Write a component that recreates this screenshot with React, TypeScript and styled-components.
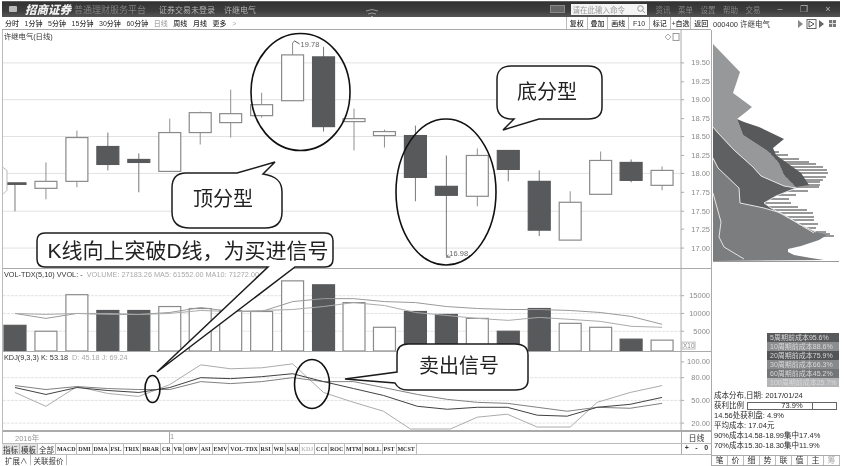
import styled, { createGlobalStyle } from 'styled-components';

const GlobalStyle = createGlobalStyle`
  html, body {
    margin: 0;
    padding: 0;
    background: #fff;
  }
  body {
    font-family: "Liberation Sans", "Noto Sans CJK SC", sans-serif;
  }
`;

const Frame = styled.div`
  width: 844px;
  height: 466px;
  box-sizing: border-box;
  padding: 1px 4px 0 2px;
  display: flex;
  flex-direction: column;
  overflow: hidden;
  background: #fff;
  color: #2a2a2a;
  filter: blur(0.45px);
`;

const TitleBar = styled.div`
  height: 16px;
  flex: none;
  display: flex;
  align-items: center;
  background: linear-gradient(#8a8a8a 0, #333 1px, #3d3d3d 60%, #555 100%);
  color: #aaa;
  font-size: 8px;
`;

const LogoMark = styled.span`
  width: 8px;
  height: 6px;
  margin: 0 8px 0 7px;
  background: #b9b9b9;
  border-radius: 1px;
`;

const Brand = styled.span`
  font-size: 11.5px;
  font-weight: 900;
  font-style: italic;
  color: #f2f2f2;
  width: 49px;
  white-space: nowrap;
`;

const TitleText = styled.span<{ $w: number; $dim?: boolean }>`
  width: ${(p) => p.$w}px;
  font-size: ${(p) => (p.$dim ? 9 : 8)}px;
  color: ${(p) => (p.$dim ? '#808080' : '#b5b5b5')};
  white-space: nowrap;
`;

const TitleSpring = styled.div`
  flex: 1;
  display: flex;
  justify-content: center;
  padding: 6px 70px 0 0;
`;

const KeyIcon = styled.span`
  width: 13px;
  height: 6px;
  margin-right: 6px;
  border: 1px solid #888;
  background: #666;
`;

const CommandBox = styled.div`
  width: 76px;
  height: 11px;
  box-sizing: border-box;
  margin-right: 9px;
  padding: 0 2px;
  display: flex;
  align-items: center;
  justify-content: space-between;
  background: #f4f4f4;
  color: #999;
  font-size: 7.5px;
`;

const TitleMenu = styled.span`
  width: 22.5px;
  font-size: 7.5px;
  color: #858585;
`;

const WinButton = styled.span`
  width: 24px;
  text-align: center;
  font-size: 9px;
  color: #bbb;
`;

const Toolbar = styled.div`
  height: 13px;
  flex: none;
  display: flex;
  align-items: center;
  font-size: 7px;
  font-weight: 500;
  color: #333;
`;

const PeriodGroup = styled.div`
  width: 564px;
  height: 100%;
  box-sizing: border-box;
  padding-left: 3px;
  display: flex;
  align-items: center;
  gap: 5.6px;
  border-bottom: 1px solid #aaa;
`;

const Period = styled.span<{ $off?: boolean }>`
  color: ${(p) => (p.$off ? '#aaa' : '#333')};
  white-space: nowrap;
`;

const ToolGroup = styled.div`
  width: 145px;
  height: 100%;
  box-sizing: border-box;
  display: flex;
  border-bottom: 1px solid #aaa;
`;

const ToolButton = styled.span`
  flex: 1;
  display: flex;
  align-items: center;
  justify-content: center;
  border-left: 1px solid #bbb;
  white-space: nowrap;
`;

const StockHead = styled.div`
  flex: 1;
  height: 100%;
  display: flex;
  align-items: center;
  justify-content: space-between;
  padding: 0 2px 0 2px;
  font-size: 7.5px;
  font-weight: 400;
`;

const Body = styled.div`
  flex: 1;
  min-height: 0;
  display: flex;
`;

const MainColumn = styled.div`
  width: 709px;
  flex: none;
  display: flex;
  flex-direction: column;
`;

const ChartStack = styled.div`
  position: relative;
  height: 402px;
  flex: none;
  display: flex;
  flex-direction: column;
  border-left: 1px solid #bbb;
  border-bottom: 1px solid #aaa;
  box-sizing: border-box;
`;

const Pane = styled.div<{ $h: number }>`
  position: relative;
  height: ${(p) => p.$h}px;
  flex: none;
  border-bottom: 1px solid #aaa;
  box-sizing: border-box;
  &:last-of-type {
    border-bottom: 0;
  }
`;

const PaneSvg = styled.svg`
  display: block;
  width: 100%;
  height: 100%;
`;

const PaneTitle = styled.div`
  position: absolute;
  left: 1px;
  top: 1px;
  font-size: 7.3px;
  color: #333;
  white-space: nowrap;
  span {
    color: #aaa;
    margin-left: 4px;
  }
`;

const Overlay = styled.svg`
  position: absolute;
  left: -1px;
  top: 0;
  width: 709px;
  height: 402px;
  pointer-events: none;
`;

const Callout = styled.div<{ $x: number; $y: number; $size?: number }>`
  position: absolute;
  left: ${(p) => p.$x}px;
  top: ${(p) => p.$y}px;
  transform: translate(-50%, -50%);
  font-size: ${(p) => p.$size ?? 20}px;
  line-height: 1;
  color: #222;
  white-space: nowrap;
`;

const DateRow = styled.div`
  height: 12px;
  flex: none;
  display: flex;
  align-items: center;
  font-size: 7.5px;
  color: #999;
  border-left: 1px solid #bbb;
  border-bottom: 1px solid #bbb;
  box-sizing: border-box;
`;

const DateMark = styled.span`
  margin-left: 12px;
  width: 154px;
  border-right: 1px solid #aaa;
`;

const DateTail = styled.div`
  flex: 1;
  height: 100%;
  border-right: 1px solid #aaa;
`;

const AxisBox = styled.div`
  width: 29px;
  height: 100%;
  flex: none;
  display: flex;
  align-items: center;
  justify-content: center;
  color: #333;
  font-size: 8px;
`;

const TabRow = styled.div`
  height: 11px;
  flex: none;
  display: flex;
  font-size: 6px;
  font-family: "Liberation Serif", "Noto Sans CJK SC", serif;
  font-weight: 700;
  color: #333;
  border-bottom: 1px solid #bbb;
  box-sizing: border-box;
`;

const Tab = styled.span<{ $cn?: boolean; $on?: boolean; $off?: boolean }>`
  display: flex;
  align-items: center;
  padding: 0 ${(p) => (p.$cn ? 1 : 0.9)}px;
  border-right: 1px solid #bbb;
  background: ${(p) => (p.$cn && !p.$on ? '#e3e3e3' : '#fff')};
  color: ${(p) => (p.$off ? '#bbb' : '#333')};
  font-family: ${(p) => (p.$cn ? '"Noto Sans CJK SC", sans-serif' : 'inherit')};
  font-weight: ${(p) => (p.$cn ? 400 : 700)};
  font-size: ${(p) => (p.$cn ? 7.5 : 6)}px;
  white-space: nowrap;
`;

const TabSpring = styled.div`
  flex: 1;
`;

const ZoomButtons = styled.div`
  width: 29px;
  flex: none;
  display: grid;
  grid-template-columns: repeat(3, 1fr);
  border-left: 1px solid #aaa;
  font-size: 7px;
  text-align: center;
  font-family: "Liberation Sans", sans-serif;
`;

const ExpandRow = styled.div`
  height: 10px;
  flex: none;
  display: flex;
  font-size: 7.5px;
  color: #333;
`;

const ExpandTab = styled.span`
  display: flex;
  align-items: center;
  padding: 0 2px 0 3px;
  border-right: 1px solid #bbb;
`;

const SideColumn = styled.div`
  flex: 1;
  min-width: 0;
  display: flex;
  flex-direction: column;
  border-left: 1px solid #aaa;
`;

const DistSvg = styled.svg`
  display: block;
  width: 129px;
  height: 303px;
  flex: none;
`;

const Legend = styled.div`
  width: 72px;
  flex: none;
  align-self: flex-end;
  margin-right: 1px;
  display: flex;
  flex-direction: column;
`;

const LegendRow = styled.div<{ $bg: string }>`
  height: 9px;
  line-height: 9px;
  padding-left: 3px;
  font-size: 7px;
  color: #d8d8d8;
  background: ${(p) => p.$bg};
  white-space: nowrap;
`;

const InfoBlock = styled.div`
  flex: 1;
  padding: 4px 0 0 2px;
  font-size: 7.5px;
  color: #2a2a2a;
  line-height: 10px;
  white-space: nowrap;
`;

const ProfitRow = styled.div`
  display: flex;
  align-items: center;
  gap: 3px;
`;

const ProfitBar = styled.div`
  width: 90px;
  height: 8px;
  box-sizing: border-box;
  border: 1px solid #666;
  position: relative;
  text-align: center;
  line-height: 6px;
  font-size: 7.5px;
  &::after {
    content: '';
    position: absolute;
    right: 23px;
    top: 0;
    bottom: 0;
    border-left: 1px solid #666;
  }
`;

const SideTabs = styled.div`
  height: 11px;
  flex: none;
  display: grid;
  grid-template-columns: repeat(8, 1fr);
  font-size: 8px;
  border-top: 1px solid #aaa;
  border-bottom: 1px solid #aaa;
  box-sizing: border-box;
`;

const SideTab = styled.span<{ $off?: boolean }>`
  text-align: center;
  line-height: 9px;
  border-right: 1px solid #bbb;
  color: ${(p) => (p.$off ? '#aaa' : '#333')};
`;

type Candle = { x: number; hi: number; lo: number; top: number; bot: number; down: boolean };
const c = (x: number, hi: number, lo: number, top: number, bot: number, down = false): Candle => ({
  x, hi, lo, top, bot, down,
});

const candles: Candle[] = [
  c(14, 184, 212, 183.5, 185, true),
  c(45, 163, 200, 182, 189),
  c(76, 131, 188, 138, 182),
  c(107, 133, 171, 147, 165, true),
  c(138, 154, 193, 160, 163, true),
  c(169, 119, 172, 133, 172),
  c(199.5, 112, 145, 113, 133),
  c(230, 90, 138, 114, 123),
  c(261, 93, 118, 105, 116),
  c(292, 43, 101, 55, 101),
  c(323, 47, 132, 57, 127, true),
  c(353.5, 109, 151, 119, 122),
  c(384, 130, 148, 132, 136),
  c(415, 126, 202, 136, 178, true),
  c(446, 156, 257, 187, 196, true),
  c(477, 149, 207, 156, 197),
  c(508, 151, 182, 151, 170, true),
  c(539, 171, 237, 182, 231, true),
  c(570, 192, 241, 203, 241),
  c(600.5, 152, 195, 161, 195),
  c(631, 160, 183, 163, 181, true),
  c(662, 167, 191, 171, 186),
];

const volumes: [number, boolean][] = [
  [326, true], [332, false], [295, false], [311, true], [311, true], [307, false], [309, false],
  [311, false], [312, false], [281, false], [285, true], [303, false], [328, false], [312, true],
  [315, true], [319, false], [332, true], [309, true], [324, false], [328, false], [340, true], [341, false],
];

const ma5 = '14,314 45,319 76,314 107,315 138,315 169,313 200,308 230,312 261,312 292,302 323,299 353,299 384,302 415,303 446,307 477,309 508,310 539,310 570,311 600,313 631,317 662,325';
const ma10 = '14,314 45,315 76,314 107,314 138,315 169,314 200,311 230,312 261,311 292,310 323,307 353,303 384,306 415,313 446,316 477,319 508,321 539,318 570,320 600,322 631,327 662,328';
const kLine = '14,388 45,395 76,388 107,391 138,393 169,388 200,378 230,379 261,377 292,374 323,382 353,389 383,396 417,407 447,410 477,408 507,408 537,416 567,417 597,408 630,405 662,398';
const dLine = '14,386 45,390 76,387 107,389 138,390 169,390 200,382 230,384 261,382 292,378 323,382 353,382 383,388 417,395 447,400 477,403 507,404 537,408 567,412 597,408 630,409 662,404';
const jLine = '14,393 45,407 76,387 107,394 138,397 169,385 200,365 230,369 261,368 292,364 323,393 350,402 383,412 410,430 450,430 477,418 507,415 537,428 570,428 597,403 630,393 662,386';

const priceLabels: [number, string, boolean][] = [
  [63, '19.50', true], [82, '19.25', false], [100, '19.00', true], [119, '18.75', false],
  [137, '18.50', true], [156, '18.25', false], [174, '18.00', true], [193, '17.75', false],
  [212, '17.50', true], [230, '17.25', false], [249, '17.00', true],
];

const stripes: [number, number][] = [
  [152, 778], [155, 787], [159, 798], [162, 808], [164, 815], [167, 822], [170, 826], [173, 827],
  [177, 825], [180, 822], [182, 819], [185, 819], [187, 818], [191, 807], [195, 795], [199, 788],
  [203, 790], [207, 797], [210, 806], [213, 812], [217, 813], [220, 813], [224, 817], [228, 815],
  [232, 825], [234, 829], [236, 833],
];

const legendRows: [string, string][] = [
  ['5周期前成本95.6%', '#58595b'],
  ['10周期前成本88.6%', '#8c8d8f'],
  ['20周期前成本75.9%', '#535456'],
  ['30周期前成本66.3%', '#88898b'],
  ['60周期前成本45.2%', '#747577'],
  ['100周期前成本25.7%', '#b4b5b7'],
];

const periods = ['分时', '1分钟', '5分钟', '15分钟', '30分钟', '60分钟', '日线', '周线', '月线', '更多', '>'];
const tools = ['复权', '叠加', '画线', 'F10', '标记', '+自选', '返回'];
const indicators = ['MACD', 'DMI', 'DMA', 'FSL', 'TRIX', 'BRAR', 'CR', 'VR', 'OBV', 'ASI', 'EMV', 'VOL-TDX', 'RSI', 'WR', 'SAR', 'KDJ', 'CCI', 'ROC', 'MTM', 'BOLL', 'PST', 'MCST'];
const menus = ['资讯', '菜单', '设置', '帮助', '交易'];
const sideTabs = ['笔', '价', '细', '势', '联', '值', '主', '筹'];

const AXIS_X = 681;
const GRID = '#e2e2e2';
const AXIS_TEXT = '#8a8a8a';

const AxisLabel = ({ y, text }: { y: number; text: string }) => (
  <text x={710} y={y + 2.5} textAnchor="end" fontSize="7.5" fill={AXIS_TEXT}>
    {text}
  </text>
);

const PricePane = () => (
  <PaneSvg viewBox="2 30 709 239" preserveAspectRatio="none">
    {priceLabels.filter((l) => l[2]).map(([y]) => (
      <line key={y} x1={2} x2={AXIS_X} y1={y} y2={y} stroke={GRID} strokeWidth="1" />
    ))}
    <line x1={AXIS_X} x2={AXIS_X} y1={30} y2={269} stroke="#aaa" />
    {priceLabels.map(([y, text]) => (
      <g key={text}>
        <line x1={AXIS_X} x2={AXIS_X + 3} y1={y} y2={y} stroke="#aaa" />
        <AxisLabel y={y} text={text} />
      </g>
    ))}
    {candles.map((k) => (
      <g key={k.x}>
        <line x1={k.x} x2={k.x} y1={k.hi} y2={k.lo} stroke={k.down ? '#777' : '#8f8f8f'} strokeWidth="1" />
        <rect
          x={k.x - 11}
          y={k.top}
          width={22}
          height={k.bot - k.top}
          fill={k.down ? '#58595b' : '#fff'}
          stroke={k.down ? '#58595b' : '#8a8a8a'}
          strokeWidth="1.2"
        />
      </g>
    ))}
    <path d="M2 168 L6 171 V191 L2 195" fill="#fff" stroke="#bbb" />
    <path d="M292 43 L294 41 L299 44" fill="none" stroke="#555" />
    <text x={300} y={47} fontSize="7.5" fill="#666">19.78</text>
    <path d="M446 258 H450 M446 258 L448 256" stroke="#444" fill="none" />
    <text x={449} y={257} fontSize="7.5" fill="#666">16.98</text>
    <path d="M668 34 L671 37 L668 40 L665 37 Z" fill="none" stroke="#aaa" />
    <rect x={673} y={33.5} width={6} height={7} fill="none" stroke="#999" />
  </PaneSvg>
);

const VolumePane = () => (
  <PaneSvg viewBox="2 269 709 83" preserveAspectRatio="none">
    {[296, 314, 332].map((y) => (
      <line key={y} x1={2} x2={AXIS_X} y1={y} y2={y} stroke={GRID} strokeDasharray="3 1" />
    ))}
    {volumes.map(([top, down], i) => (
      <rect
        key={i}
        x={candles[i].x - 11}
        y={top}
        width={22}
        height={352 - top}
        fill={down ? '#58595b' : '#fff'}
        stroke={down ? '#58595b' : '#8a8a8a'}
        strokeWidth="1.2"
      />
    ))}
    <polyline points={ma5} fill="none" stroke="#999" />
    <polyline points={ma10} fill="none" stroke="#aaa" />
    <line x1={AXIS_X} x2={AXIS_X} y1={269} y2={352} stroke="#aaa" />
    {[[296, '15000'], [314, '10000'], [332, '5000']].map(([y, t]) => (
      <g key={t}>
        <line x1={AXIS_X} x2={AXIS_X + 3} y1={y} y2={y} stroke="#aaa" />
        <AxisLabel y={Number(y)} text={String(t)} />
      </g>
    ))}
    <rect x={682} y={343} width={13} height={7} fill="#fff" stroke="#bbb" />
    <text x={683} y={349} fontSize="6.5" fill="#888">X10</text>
  </PaneSvg>
);

const KdjPane = () => (
  <PaneSvg viewBox="2 352 709 79" preserveAspectRatio="none">
    {[378, 401, 424].map((y) => (
      <line key={y} x1={2} x2={AXIS_X} y1={y} y2={y} stroke={GRID} strokeDasharray="3 1" />
    ))}
    <polyline points={jLine} fill="none" stroke="#aaa" />
    <polyline points={dLine} fill="none" stroke="#808080" />
    <polyline points={kLine} fill="none" stroke="#3f3f3f" />
    <line x1={AXIS_X} x2={AXIS_X} y1={352} y2={432} stroke="#aaa" />
    {[[362, '100.00'], [378, '80.00'], [401, '50.00'], [424, '20.00']].map(([y, t]) => (
      <g key={t}>
        <line x1={AXIS_X} x2={AXIS_X + 3} y1={y} y2={y} stroke="#aaa" />
        <AxisLabel y={Number(y)} text={String(t)} />
      </g>
    ))}
  </PaneSvg>
);

const bubble = { fill: '#fff', stroke: '#1c1c1c', strokeWidth: 1.5 };

// callout shapes and rings, coordinates are page pixels
const Annotations = () => (
  <Overlay viewBox="2 30 709 402">
    <g fill="none" stroke="#111" strokeWidth="1.6">
      <ellipse cx={300.5} cy={92} rx={49.5} ry={58.5} />
      <ellipse cx={446} cy={192} rx={50} ry={73} />
      <ellipse cx={152.5} cy={389} rx={7.5} ry={13.5} />
      <ellipse cx={312} cy={384} rx={17.5} ry={24.5} />
    </g>
    <path
      {...bubble}
      d="M186 173 H237 L275 162 L263 174 C277 176 282 182 282 192 V212 C282 223 276 228 265 228 H190 C178 228 172 222 172 212 V188 C172 178 176 173 186 173 Z"
    />
    <path
      {...bubble}
      d="M511 66 H588 C598 66 602 71 602 79 V107 C602 115 598 119 588 119 H539 L503 130 L514 119 H510 C501 118 497 113 497 105 V79 C497 71 502 66 511 66 Z"
    />
    <path
      {...bubble}
      d="M45 233 H325 C331 233 333 236 333 241 V259 C333 264 331 267 325 267 H295 L157 372 L268 267 H45 C39 267 37 264 37 259 V241 C37 236 39 233 45 233 Z"
    />
    <path
      {...bubble}
      d="M408 344 H515 C524 344 528 348 528 355 V380 C528 387 524 390 515 390 H408 C401 390 397 387 395 383 L345 379 L397 372 V355 C397 348 401 344 408 344 Z"
    />
  </Overlay>
);

const DistributionChart = () => (
  <DistSvg viewBox="711 30 129 303">
    {stripes.map(([y, x]) => (
      <line key={y} x1={740} x2={x} y1={y} y2={y} stroke="#333" strokeWidth="1" />
    ))}
    <polygon
      fill="#7c7d7f"
      points="712,158 717,168 738,188 739,203 763,208 780,213 800,225 815,232 826,235 818,240 800,246 787,249 787,252 793,255 810,258 823,260 712,261"
    />
    <polygon
      fill="#5f6062"
      points="712,127 717,133 733,150 752,167 760,176 783,186 795,188 775,196 763,203 770,208 793,221 813,233 800,225 780,213 763,208 739,203 738,188 717,168 712,158"
    />
    <polygon
      fill="#97989a"
      points="712,44 739,72 732,93 751,107 745,112 736,119 742,135 768,152 778,163 783,175 795,187 783,186 760,176 752,167 733,150 717,133 712,127"
    />
    <polygon
      fill="#58595b"
      points="749,109 736,119 743,122 758,127 783,139 772,148 775,155 800,173 808,185 795,187 783,175 778,163 768,152 742,135 736,119"
    />
    <g fill="none" stroke="#e4e4e4" strokeWidth="1">
      <polyline points="712,127 717,133 733,150 752,167 760,176 783,186 795,188 775,196 763,203 770,208 793,221 813,233" />
      <polyline points="712,158 717,168 738,188 739,203 763,208 780,213 800,225 815,232" />
      <polyline points="712,193 720,222 718,237 723,247 743,259" />
    </g>
    <line x1={712} x2={838} y1={261.5} y2={261.5} stroke="#999" />
  </DistSvg>
);

const App = () => (
  <>
    <GlobalStyle />
    <Frame>
      <TitleBar>
        <LogoMark />
        <Brand>招商证券</Brand>
        <TitleText $w={85} $dim>普通理财服务平台</TitleText>
        <TitleText $w={65}>证券交易未登录</TitleText>
        <TitleText $w={40}>许继电气</TitleText>
        <TitleSpring>
          <svg width="14" height="9" viewBox="0 0 14 9">
            <path d="M1 3 Q7 0 13 3 M3 6 Q7 4 11 6 M6 8.5 H8" fill="none" stroke="#999" />
          </svg>
        </TitleSpring>
        <KeyIcon />
        <CommandBox>
          请在此输入命令
          <svg width="8" height="8" viewBox="0 0 8 8">
            <circle cx="3.5" cy="3.5" r="2.8" fill="none" stroke="#999" />
            <path d="M5.6 5.6 L8 8" stroke="#999" />
          </svg>
        </CommandBox>
        {menus.map((m) => (
          <TitleMenu key={m}>{m}</TitleMenu>
        ))}
        <WinButton>–</WinButton>
        <WinButton>❐</WinButton>
        <WinButton>×</WinButton>
      </TitleBar>
      <Toolbar>
        <PeriodGroup>
          {periods.map((p) => (
            <Period key={p} $off={p === '日线' || p === '>'}>{p}</Period>
          ))}
        </PeriodGroup>
        <ToolGroup>
          {tools.map((t) => (
            <ToolButton key={t}>{t}</ToolButton>
          ))}
        </ToolGroup>
        <StockHead>
          000400 许继电气
          <svg width="40" height="10" viewBox="0 0 40 10">
            <path d="M0 1 L5 5 L0 9 Z" fill="#888" />
            <rect x="9" y="0.5" width="9" height="9" fill="#fff" stroke="#666" />
            <path d="M11 2 L16 5 L11 8 Z" fill="none" stroke="#555" />
            <path d="M21 1 L26 5 L21 9 Z" fill="#666" />
            <rect x="31" y="1" width="7" height="7" fill="#777" />
            <path d="M31 4.5 H38 M34.5 1 V8" stroke="#ddd" />
          </svg>
        </StockHead>
      </Toolbar>
      <Body>
        <MainColumn>
          <ChartStack>
            <Pane $h={239}>
              <PricePane />
              <PaneTitle>许继电气(日线)</PaneTitle>
            </Pane>
            <Pane $h={83}>
              <VolumePane />
              <PaneTitle>
                VOL-TDX(5,10) VVOL: -<span>VOLUME: 27183.26 MA5: 61552.00 MA10: 71272.00</span>
              </PaneTitle>
            </Pane>
            <Pane $h={79}>
              <KdjPane />
              <PaneTitle>
                KDJ(9,3,3) K: 53.18<span>D: 45.18 J: 69.24</span>
              </PaneTitle>
            </Pane>
            <Annotations />
            <Callout $x={220} $y={169}>顶分型</Callout>
            <Callout $x={544} $y={62}>底分型</Callout>
            <Callout $x={185} $y={220} $size={21}>K线向上突破D线，为买进信号</Callout>
            <Callout $x={456} $y={336}>卖出信号</Callout>
          </ChartStack>
          <DateRow>
            <DateMark>2016年</DateMark>
            <DateTail>1</DateTail>
            <AxisBox>日线</AxisBox>
          </DateRow>
          <TabRow>
            <Tab $cn>指标</Tab>
            <Tab $cn>模板</Tab>
            <Tab $cn $on>全部</Tab>
            {indicators.map((name) => (
              <Tab key={name} $off={name === 'KDJ'}>{name}</Tab>
            ))}
            <TabSpring />
            <ZoomButtons>
              <span>+</span>
              <span>-</span>
              <span>0</span>
            </ZoomButtons>
          </TabRow>
          <ExpandRow>
            <ExpandTab>扩展∧</ExpandTab>
            <ExpandTab>关联报价</ExpandTab>
          </ExpandRow>
        </MainColumn>
        <SideColumn>
          <DistributionChart />
          <Legend>
            {legendRows.map(([text, bg]) => (
              <LegendRow key={text} $bg={bg}>{text}</LegendRow>
            ))}
          </Legend>
          <InfoBlock>
            <div>成本分布,日期: 2017/01/24</div>
            <ProfitRow>
              获利比例
              <ProfitBar>73.9%</ProfitBar>
            </ProfitRow>
            <div>14.56处获利盘: 4.9%</div>
            <div>平均成本: 17.04元</div>
            <div>90%成本14.58-18.99集中17.4%</div>
            <div>70%成本15.30-18.30集中11.9%</div>
          </InfoBlock>
          <SideTabs>
            {sideTabs.map((t) => (
              <SideTab key={t} $off={t === '筹'}>{t}</SideTab>
            ))}
          </SideTabs>
        </SideColumn>
      </Body>
    </Frame>
  </>
);

export default App;
